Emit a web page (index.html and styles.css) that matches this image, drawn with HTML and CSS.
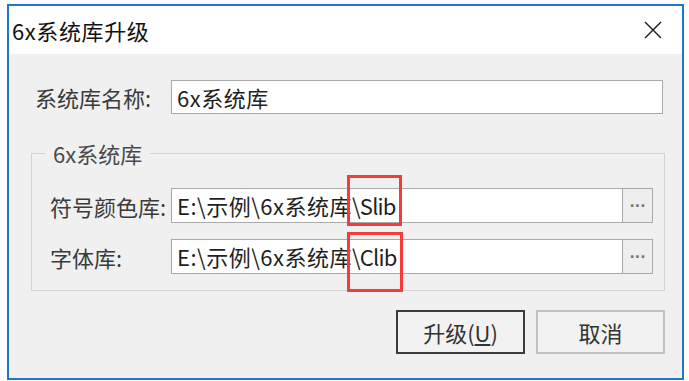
FILE: index.html
```html
<!DOCTYPE html>
<html lang="zh-CN">
<head>
    <meta charset="UTF-8">
    <title>6x系统库升级</title>
    <link rel="stylesheet" href="styles.css">
</head>
<body>
    <div class="window">
        <div class="titlebar">
            <span class="title">6x系统库升级</span>
            <svg class="close" width="18" height="18" viewBox="0 0 18 18">
                <path d="M1 1 L17 17 M17 1 L1 17" stroke="#1a1a1a" stroke-width="1.4" fill="none"/>
            </svg>
        </div>
        <div class="content">
            <div class="row name-row">
                <label class="label">系统库名称:</label>
                <div class="field">6x系统库</div>
            </div>

            <fieldset class="group">
                <legend>6x系统库</legend>
                <div class="row lib-row">
                    <label class="label">符号颜色库:</label>
                    <div class="field">E:\示例\6x系统库<span class="mark mark-top">\Slib</span></div>
                    <button class="browse">···</button>
                </div>
                <div class="row lib-row">
                    <label class="label">字体库:</label>
                    <div class="field">E:\示例\6x系统库<span class="mark mark-bottom">\Clib</span></div>
                    <button class="browse">···</button>
                </div>
            </fieldset>

            <div class="actions">
                <button class="btn btn-default">升级(<u>U</u>)</button>
                <button class="btn">取消</button>
            </div>
        </div>
    </div>
</body>
</html>
```

FILE: styles.css
```css
body {
    margin: 0;
    padding: 4px 0 0 7px;
    background: #ffffff;
    font-family: "Noto Sans CJK SC", "Noto Sans", sans-serif;
    font-size: 22px;
    color: #333;
}
.window {
    width: 677px;
    height: 376px;
    box-sizing: border-box;
    border: 2px solid #1f76c6;
    background: #f0f0f0;
    display: flex;
    flex-direction: column;
}
.titlebar {
    height: 48px;
    flex: none;
    background: #ffffff;
    display: flex;
    align-items: center;
    justify-content: space-between;
    padding: 0 20px 0 3px;
}
.title {
    color: #111;
    line-height: 30px;
    letter-spacing: 0.6px;
}
.content {
    padding: 26px 17px 0 22px;
}
.row {
    display: flex;
    align-items: center;
}
.name-row {
    padding: 0 2px 0 4px;
}
.name-row .label {
    width: 136px;
}
.label {
    line-height: 30px;
    color: #3a3a3a;
}
.field {
    flex: 1;
    height: 34px;
    box-sizing: border-box;
    border: 1px solid #a9a9a9;
    background: #ffffff;
    padding: 0 5px;
    line-height: 32px;
    color: #1f1f1f;
    white-space: nowrap;
    letter-spacing: 0.5px;
}
.group {
    margin: 24px 0 0;
    padding: 20px 11px 16px 18px;
    border: 1px solid #d3d3d3;
}
.group legend {
    margin-left: -5px;
    padding: 0 8px;
    line-height: 30px;
    color: #4a4a4a;
}
.lib-row + .lib-row {
    margin-top: 16px;
}
.lib-row .label {
    width: 121px;
}
.lib-row .field {
    height: 35px;
    border-right: none;
}
.browse {
    width: 31px;
    height: 35px;
    box-sizing: border-box;
    border: 1px solid #a9a9a9;
    background: #eeeeee;
    color: #777;
    font-family: "DejaVu Sans", sans-serif;
    font-size: 14px;
    font-weight: bold;
    padding: 0;
    letter-spacing: 0;
}
.mark {
    position: relative;
    display: inline-block;
    letter-spacing: -0.8px;
}
.mark::after {
    content: "";
    position: absolute;
    border: 3px solid #f53b3b;
}
.mark-top::after {
    top: -14px;
    bottom: -5px;
    left: -5px;
    right: -6px;
}
.mark-bottom::after {
    top: -8px;
    bottom: -20px;
    left: -5px;
    right: -6px;
}
.actions {
    display: flex;
    justify-content: flex-end;
    gap: 11px;
    margin-top: 19px;
}
.btn {
    width: 129px;
    height: 44px;
    box-sizing: border-box;
    border: 2px solid #c2c2c2;
    background: #f2f2f2;
    font-family: inherit;
    font-size: 22px;
    color: #333;
    padding: 0;
}
.btn-default {
    border-color: #3c3c3c;
}
```
